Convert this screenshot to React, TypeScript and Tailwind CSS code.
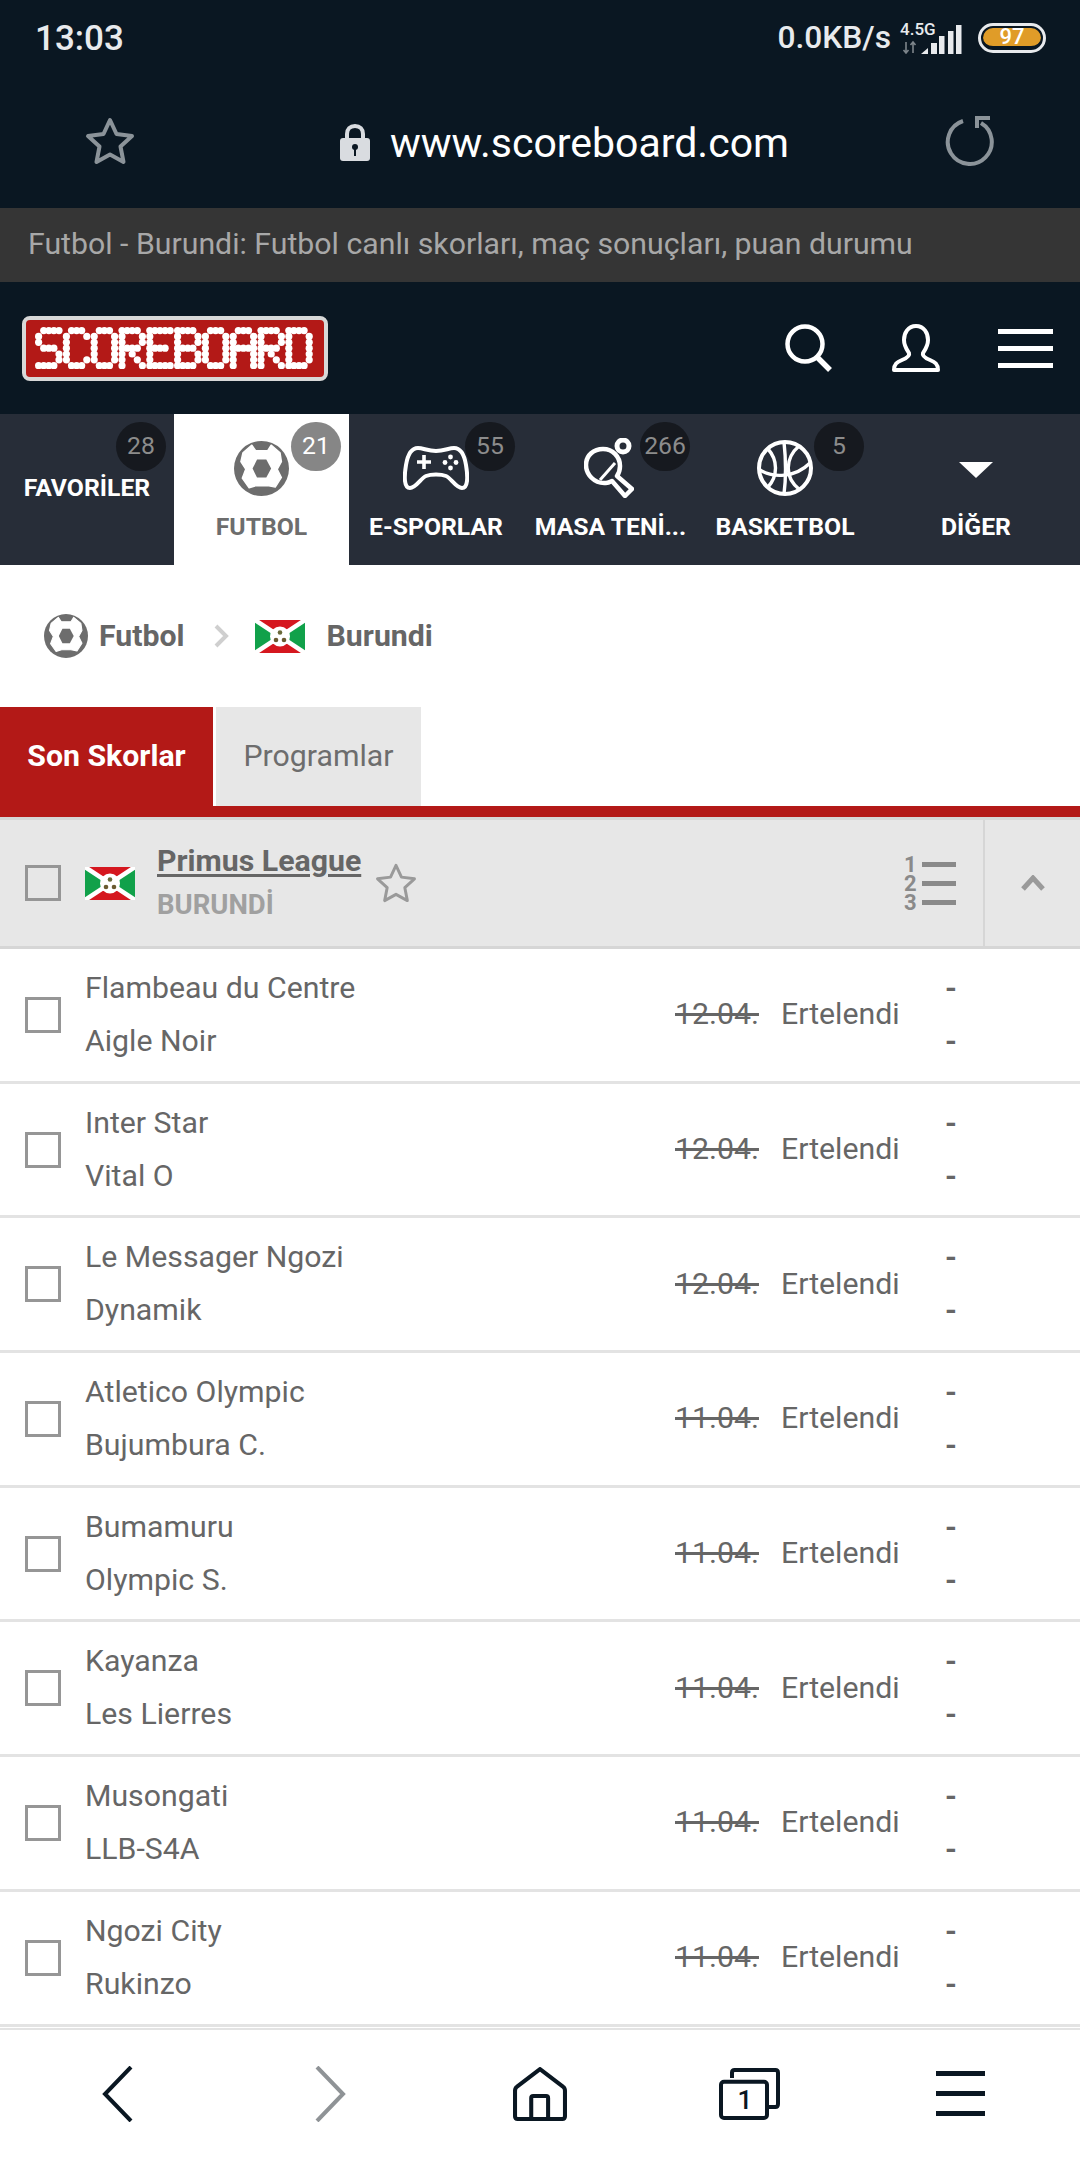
import React from "react";

const GLYPHS: Record<string, string[]> = {
  S: [".####", "#....", "#....", ".###.", "....#", "....#", "####."],
  C: [".###.", "#...#", "#....", "#....", "#....", "#...#", ".###."],
  O: [".###.", "#...#", "#...#", "#...#", "#...#", "#...#", ".###."],
  R: ["####.", "#...#", "#...#", "####.", "#.#..", "#..#.", "#...#"],
  E: ["#####", "#....", "#....", "####.", "#....", "#....", "#####"],
  B: ["####.", "#...#", "#...#", "####.", "#...#", "#...#", "####."],
  A: [".###.", "#...#", "#...#", "#####", "#...#", "#...#", "#...#"],
  D: ["####.", "#...#", "#...#", "#...#", "#...#", "#...#", "####."],
};

function Logo() {
  const dots: React.ReactElement[] = [];
  "SCOREBOARD".split("").forEach((ch, i) => {
    GLYPHS[ch].forEach((row, y) => {
      row.split("").forEach((c, x) => {
        if (c === "#")
          dots.push(<circle key={`${i}-${x}-${y}`} cx={3.6 + i * 27.8 + x * 5.1} cy={3.6 + y * 5.85} r={3.6} fill="#fff" />);
      });
    });
  });
  return (
    <div className="ml-[22px] flex h-[65px] w-[306px] items-center justify-center rounded-[8px] border-[4px] border-[#d8d8d8] bg-[#b31917]">
      <svg width="280" height="42" viewBox="0 0 280 42" role="img" aria-label="SCOREBOARD">
        {dots}
      </svg>
    </div>
  );
}

function Ball({ size }: { size: number }) {
  return (
    <svg width={size} height={size} viewBox="12 12 160 160">
      <circle cx="92" cy="92" r="80" fill="#6d6d6d" />
      <path
        d="M75 40 H110 L120 24 L146 46 L150 72 L138 94 L150 118 L132 146 L110 142 H76 L56 148 L36 120 L46 94 L32 72 L38 46 L64 24 Z"
        fill="#fff"
        stroke="#fff"
        strokeWidth="4"
        strokeLinejoin="round"
      />
      <path d="M66 92 L79 66 H106 L120 92 L106 118 H79 Z" fill="#6d6d6d" />
    </svg>
  );
}

function Gamepad() {
  return (
    <svg width="66" height="46" viewBox="0 0 66 46" fill="none" stroke="#fff" strokeWidth="4">
      <path d="M15 3 C20 3 25 6 33 6 C41 6 46 3 51 3 C57 3 61 8 63 20 C65 32 65 43 59 43 C53 43 48 33 43 31 C38 29 28 29 23 31 C18 33 13 43 7 43 C1 43 1 32 3 20 C5 8 9 3 15 3Z" strokeLinejoin="round" />
      <path d="M14 17 H28 M21 10 V24" strokeWidth="3.6" />
      <circle cx="47.5" cy="12" r="2.4" fill="#fff" stroke="none" />
      <circle cx="47.5" cy="23" r="2.4" fill="#fff" stroke="none" />
      <circle cx="42" cy="17.5" r="2.4" fill="#fff" stroke="none" />
      <circle cx="53" cy="17.5" r="2.4" fill="#fff" stroke="none" />
    </svg>
  );
}

function Paddle() {
  return (
    <svg width="50" height="60" viewBox="0 0 50 60" fill="none" stroke="#fff" strokeWidth="4.5" strokeLinejoin="round">
      <circle cx="39" cy="8" r="6" strokeWidth="5" />
      <path d="M22 45 C10 46 2 36 2 27 C2 17 10 11 19 11 C29 11 36 19 36 28 C36 32 35 35 33 38 L48 51 L41 58 L28 43 C26 44 24 45 22 45 Z" />
      <path d="M16 42 L31 25" strokeWidth="3" />
    </svg>
  );
}

function Basket() {
  return (
    <svg width="56" height="56" viewBox="0 0 56 56" fill="none" stroke="#fff" strokeWidth="3.4">
      <circle cx="28" cy="28" r="26" strokeWidth="4" />
      <path d="M27 2 C29 20 29 38 27 54" />
      <path d="M3 30 C16 38 38 38 53 23" />
      <path d="M11 9 C21 20 21 36 11 47" />
      <path d="M42 6 C28 18 27 38 43 50" />
    </svg>
  );
}

function NavTab({ w, label, count, icon, active, center }: { w: string; label: string; count?: string; icon?: React.ReactNode; active?: boolean; center?: boolean }) {
  return (
    <div className={`relative flex h-full flex-col items-center ${w} ${active ? "bg-white" : ""} ${center ? "justify-start pt-[60px]" : "justify-end pb-[24px]"}`}>
      {icon && <div className="absolute inset-x-0 top-[24px] flex h-[60px] items-center justify-center">{icon}</div>}
      <span className={`text-[24.75px] font-bold leading-[28px] whitespace-nowrap ${active ? "text-[#6d6d6d]" : "text-white"}`}>{label}</span>
      {count && (
        <span className={`absolute right-[8px] top-[8px] flex h-[49px] w-[50px] items-center justify-center rounded-full text-[24.75px] leading-none ${active ? "bg-[#868686] text-white" : "bg-[#16191f] text-[#8c8c8c]"}`}>
          {count}
        </span>
      )}
    </div>
  );
}

function Flag({ w, h }: { w: number; h: number }) {
  return (
    <svg width={w} height={h} viewBox="0 0 50 33" preserveAspectRatio="none">
      <rect width="50" height="33" fill="#d5171f" />
      <path d="M0 0 L25 16.5 L0 33 Z M50 0 L25 16.5 L50 33 Z" fill="#11a14a" />
      <path d="M0 0 L50 33 M50 0 L0 33" stroke="#fff" strokeWidth="4.5" />
      <circle cx="25" cy="16.5" r="10" fill="#fff" />
      <circle cx="25" cy="12.5" r="2.3" fill="#6a6a3a" />
      <circle cx="21" cy="20" r="2.3" fill="#6a5a30" />
      <circle cx="29" cy="20" r="2.3" fill="#6a5a30" />
    </svg>
  );
}

function Box() {
  return <div className="h-[36px] w-[36px] border-[3.5px] border-[#969696]" />;
}

const matches = [
  ["Flambeau du Centre", "Aigle Noir", "12.04."],
  ["Inter Star", "Vital O", "12.04."],
  ["Le Messager Ngozi", "Dynamik", "12.04."],
  ["Atletico Olympic", "Bujumbura C.", "11.04."],
  ["Bumamuru", "Olympic S.", "11.04."],
  ["Kayanza", "Les Lierres", "11.04."],
  ["Musongati", "LLB-S4A", "11.04."],
  ["Ngozi City", "Rukinzo", "11.04."],
];

export default function App() {
  return (
    <div className="flex h-[2160px] w-[1080px] flex-col overflow-hidden bg-white font-[Roboto,sans-serif]">
      <div className="h-[208px] bg-[#0a1722]">
        <div className="flex h-[76px] items-center justify-between pl-[35px] pr-[34px]">
          <span className="text-[35px] font-medium leading-none text-[#e8eaed]">13:03</span>
          <div className="flex items-center">
            <span className="text-[31.7px] font-medium leading-none text-[#e8eaed]">0.0KB/s</span>
            <div className="relative ml-[9px] h-[32px] w-[62px]">
              <span className="absolute left-0 top-[-2px] text-[17px] font-medium leading-[18px] text-[#e8eaed]">4.5G</span>
              <svg className="absolute left-0 top-0" width="62" height="32" viewBox="0 0 62 32" fill="#e8eaed">
                <path d="M6 20 V31 M3.5 28 L6 31 L8.5 28 M13 31 V20 M10.5 23 L13 20 L15.5 23" stroke="#7d858b" strokeWidth="1.6" fill="none" />
                <path d="M21 32 L28 26 V32 Z" />
                <rect x="31" y="21" width="6" height="11" />
                <rect x="39" y="14" width="5.5" height="18" />
                <rect x="48" y="9" width="5.5" height="23" />
                <rect x="56" y="3" width="5.5" height="29" />
              </svg>
            </div>
            <div className="ml-[16px] flex h-[30px] w-[68px] items-center justify-center rounded-full border-[3px] border-[#e8eaed] p-[2px]">
              <div className="flex h-full w-full items-center justify-center rounded-full border-b-[2px] border-[#0a1722] bg-[#e09c28] text-[22px] font-medium leading-none text-white">97</div>
            </div>
          </div>
        </div>
        <div className="flex h-[132px] items-center pb-[2px]">
          <div className="ml-[85px] flex w-[50px] items-center justify-center">
            <svg width="50" height="48" viewBox="0 0 50 48" fill="none" stroke="#8b9399" strokeWidth="4" strokeLinejoin="round">
              <path d="M25 3 L31.5 17 L47 19 L35.5 29.5 L38.5 45 L25 37.5 L11.5 45 L14.5 29.5 L3 19 L18.5 17 Z" />
            </svg>
          </div>
          <svg className="ml-[204px] mt-[2px]" width="32" height="37" viewBox="0 0 32 37">
            <path d="M8 16 V10 C8 5 11 2 16 2 C21 2 24 5 24 10 V16" fill="none" stroke="#d9dce0" strokeWidth="4" />
            <rect x="1" y="14" width="30" height="23" rx="3" fill="#d9dce0" />
            <circle cx="16" cy="23" r="3" fill="#0a1722" />
            <rect x="15" y="24" width="2" height="8" fill="#0a1722" />
          </svg>
          <span className="ml-[19px] mt-[5px] text-[41px] leading-none text-white">www.scoreboard.com</span>
          <svg className="ml-auto mr-[83px]" width="52" height="50" viewBox="0 0 52 50" fill="none" stroke="#8b9399" strokeWidth="4">
            <path d="M18 5 A22 22 0 1 0 36 7" />
            <path d="M45 2 H32 V12" />
          </svg>
        </div>
      </div>

      <div className="flex h-[74px] items-center bg-[#353535] pb-[2px] pl-[28px] text-[30.25px] text-[#a8a8a8]">Futbol - Burundi: Futbol canlı skorları, maç sonuçları, puan durumu</div>

      <div className="flex h-[132px] items-center bg-[#0a1722]">
        <Logo />
        <svg className="ml-auto" width="48" height="48" viewBox="0 0 48 48" fill="none" stroke="#fff" strokeWidth="4.5">
          <circle cx="20" cy="20" r="17.5" />
          <path d="M31 32 L45 46" strokeWidth="5.5" />
        </svg>
        <svg className="ml-[58px]" width="50" height="48" viewBox="0 0 50 48" fill="none" stroke="#fff" strokeWidth="4" strokeLinejoin="round">
          <path d="M25 2 C17 2 13 9 13 16 C13 22 16 26 18 29 C19 32 16 34 11 36 C6 38 3 40 3 46 L47 46 C47 40 44 38 39 36 C34 34 31 32 32 29 C34 26 37 22 37 16 C37 9 33 2 25 2Z" />
        </svg>
        <div className="ml-[57px] mr-[27px] flex h-[39px] w-[55px] flex-col justify-between">
          <div className="h-[5px] bg-white" />
          <div className="h-[5px] bg-white" />
          <div className="h-[5px] bg-white" />
        </div>
      </div>

      <div className="flex h-[151px] bg-[#272d38]">
        <NavTab w="w-[174px]" label="FAVORİLER" count="28" center />
        <NavTab w="w-[175px]" label="FUTBOL" count="21" active icon={<Ball size={55} />} />
        <NavTab w="w-[174px]" label="E-SPORLAR" count="55" icon={<Gamepad />} />
        <NavTab w="w-[175px]" label="MASA TENİ..." count="266" icon={<div className="mr-[4px]"><Paddle /></div>} />
        <NavTab w="w-[174px]" label="BASKETBOL" count="5" icon={<Basket />} />
        <div className="relative flex w-[208px] flex-col items-center justify-end pb-[24px]">
          <div className="absolute top-[48px] h-0 w-0 border-x-[17px] border-t-[16px] border-x-transparent border-t-white" />
          <span className="text-[24.75px] font-bold leading-[28px] text-white">DİĞER</span>
        </div>
      </div>

      <div className="flex h-[142px] items-center pl-[44px]">
        <Ball size={44} />
        <span className="ml-[11px] text-[30.25px] font-bold text-[#666]">Futbol</span>
        <svg className="ml-[28px]" width="16" height="24" viewBox="0 0 16 24" fill="none" stroke="#cfcfcf" strokeWidth="4">
          <path d="M3 2 L13 12 L3 22" />
        </svg>
        <div className="ml-[26px]"><Flag w={50} h={33} /></div>
        <span className="ml-[22px] text-[30.25px] font-bold text-[#666]">Burundi</span>
      </div>

      <div className="flex h-[99px] items-stretch">
        <div className="flex w-[213px] items-center justify-center bg-[#b31917] pb-[2px] text-[30.25px] font-bold text-white">Son Skorlar</div>
        <div className="ml-[3px] flex w-[205px] items-center justify-center bg-[#e7e7e7] pb-[2px] text-[30.25px] text-[#6d6d6d]">Programlar</div>
      </div>
      <div className="h-[11px] bg-[#b31917]" />

      <div className="mt-0 flex h-[132px] border-y-[3px] border-[#d6d6d6] bg-[#e7e7e7]">
        <div className="flex flex-1 items-center pl-[25px]">
          <Box />
          <div className="ml-[24px]"><Flag w={50} h={33} /></div>
          <div className="ml-[22px] flex flex-col">
            <span className="text-[30.25px] font-bold leading-[44px] text-[#666] underline decoration-[3px] underline-offset-[3px]">Primus League</span>
            <span className="text-[27.5px] font-bold leading-[44px] text-[#a0a0a0]">BURUNDİ</span>
          </div>
          <svg className="ml-[14px]" width="42" height="42" viewBox="0 0 50 48" fill="none" stroke="#9a9a9a" strokeWidth="3.5" strokeLinejoin="round">
            <path d="M25 3 L31.5 17 L47 19 L35.5 29.5 L38.5 45 L25 37.5 L11.5 45 L14.5 29.5 L3 19 L18.5 17 Z" />
          </svg>
          <div className="ml-auto mr-[27px] grid grid-cols-[18px_34px] items-center text-[22px] font-bold leading-[19px] text-[#8a8a8a]">
            <span>1</span><div className="h-[5px] bg-[#8a8a8a]" />
            <span>2</span><div className="h-[5px] bg-[#8a8a8a]" />
            <span>3</span><div className="h-[5px] bg-[#8a8a8a]" />
          </div>
        </div>
        <div className="flex w-[97px] items-center justify-center border-l-[2px] border-[#d6d6d6]">
          <svg width="24" height="16" viewBox="0 0 24 16" fill="none" stroke="#9a9a9a" strokeWidth="5">
            <path d="M2 14 L12 3 L22 14" />
          </svg>
        </div>
      </div>

      {matches.map((m, i) => (
        <div key={i} className="flex h-[134.7px] shrink-0 items-center border-b-[3px] border-[#e3e3e3] pb-[2px] text-[30.25px] text-[#666]">
          <div className="mt-[2px] w-[85px] pl-[25px]"><Box /></div>
          <div className="flex flex-1 flex-col leading-[53px]">
            <span>{m[0]}</span>
            <span>{m[1]}</span>
          </div>
          <span className="w-[106px] line-through decoration-[3px]">{m[2]}</span>
          <span className="w-[164px]">Ertelendi</span>
          <div className="flex w-[135px] flex-col font-bold leading-[53px]">
            <span>-</span>
            <span>-</span>
          </div>
        </div>
      ))}

      <div className="mt-[1px] grid flex-1 grid-cols-[236px_188px_232px_186px_236px] items-center justify-items-center border-t-[2px] border-[#e3e3e3] pb-[2px]">
        <svg width="32" height="56" viewBox="0 0 32 56" fill="none" stroke="#0a1722" strokeWidth="4">
          <path d="M29 1 L3 28 L29 55" />
        </svg>
        <svg width="32" height="56" viewBox="0 0 32 56" fill="none" stroke="#8f9396" strokeWidth="4">
          <path d="M3 1 L29 28 L3 55" />
        </svg>
        <svg width="54" height="54" viewBox="0 0 160 160" fill="none" stroke="#0a1722" strokeWidth="12" strokeLinejoin="round">
          <path d="M80 6 L148 58 Q154 62 154 70 V146 Q154 154 146 154 H14 Q6 154 6 146 V70 Q6 62 12 58 Z" />
          <path d="M54 154 V92 Q54 86 60 86 H98 Q104 86 104 92 V154" />
        </svg>
        <svg width="61" height="52" viewBox="655 52 183 156" fill="none" stroke="#0a1722" strokeWidth="12">
          <path d="M694 82 V66 Q694 58 702 58 H824 Q832 58 832 66 V160 Q832 169 824 169 H805" />
          <rect x="661" y="93" width="138" height="109" rx="9" />
          <text x="733" y="175" textAnchor="middle" fontSize="78" fontWeight="500" fill="#0a1722" stroke="none" fontFamily="Roboto">1</text>
        </svg>
        <div className="flex h-[45px] w-[49px] flex-col justify-between">
          <div className="h-[5px] bg-[#0a1722]" />
          <div className="h-[5px] bg-[#0a1722]" />
          <div className="h-[5px] bg-[#0a1722]" />
        </div>
      </div>
    </div>
  );
}
